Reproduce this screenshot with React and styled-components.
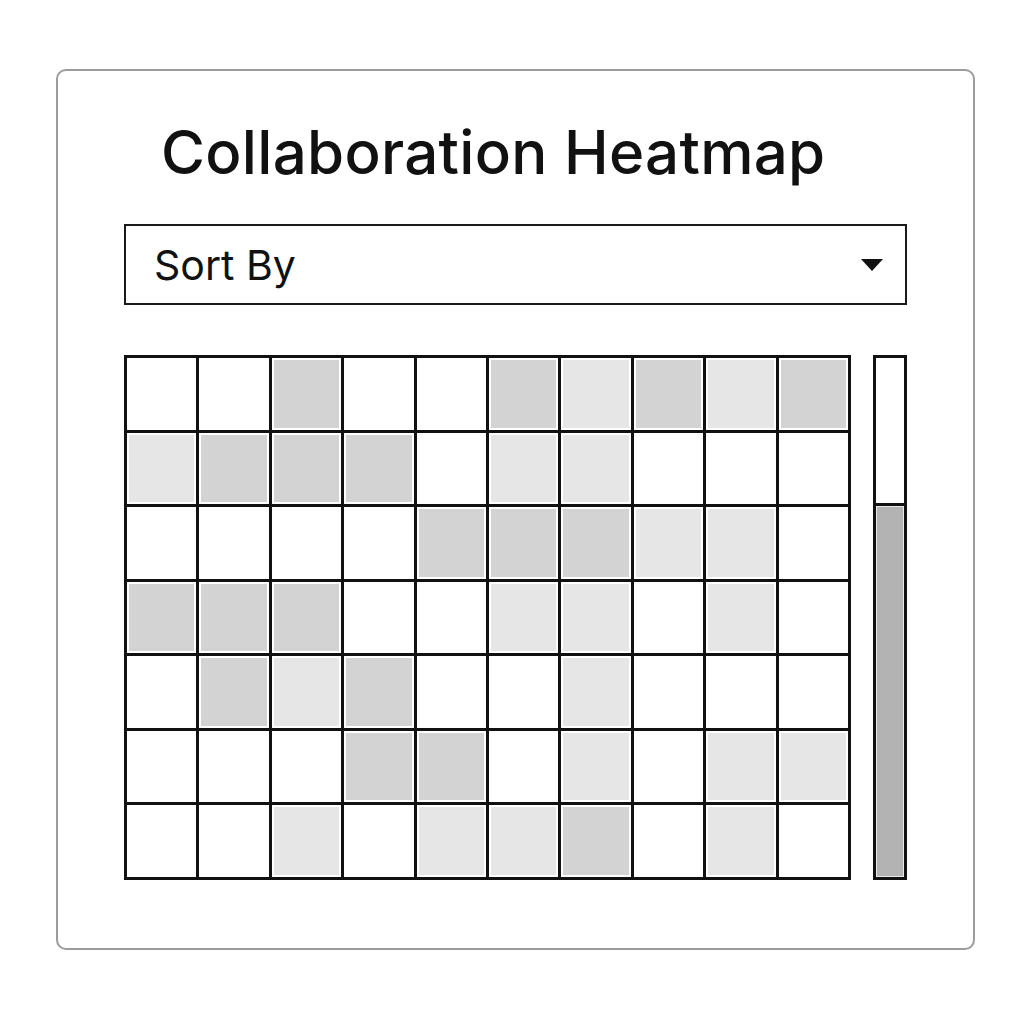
import React from 'react';
import styled, { createGlobalStyle } from 'styled-components';

const levels = [
  [0, 0, 2, 0, 0, 2, 1, 2, 1, 2],
  [1, 2, 2, 2, 0, 1, 1, 0, 0, 0],
  [0, 0, 0, 0, 2, 2, 2, 1, 1, 0],
  [2, 2, 2, 0, 0, 1, 1, 0, 1, 0],
  [0, 2, 1, 2, 0, 0, 1, 0, 0, 0],
  [0, 0, 0, 2, 2, 0, 1, 0, 1, 1],
  [0, 0, 1, 0, 1, 1, 2, 0, 1, 0],
];

const shades = ['#ffffff', '#e6e6e6', '#d3d3d3'];

const GlobalStyle = createGlobalStyle`
  body {
    margin: 0;
    background: #ffffff;
    font-family: Inter, "Liberation Sans", sans-serif;
    color: #111111;
  }
`;

const Page = styled.div`
  padding: 69px 0 0 56px;
`;

const Card = styled.section`
  box-sizing: border-box;
  width: 919px;
  height: 881px;
  padding: 46px 66px 0;
  border: 2px solid #9c9c9c;
  border-radius: 10px;
  display: flex;
  flex-direction: column;
`;

const Title = styled.h1`
  margin: 0 0 37px 37px;
  font-size: 60px;
  line-height: 70px;
  font-weight: 500;
  letter-spacing: 0.3px;
  color: #111111;
`;

const Select = styled.div`
  box-sizing: border-box;
  height: 81px;
  padding: 0 22px 0 28px;
  border: 2px solid #1a1a1a;
  display: flex;
  align-items: center;
  justify-content: space-between;
  font-size: 41px;
  font-weight: 400;
  margin-bottom: 50px;
`;

const Body = styled.div`
  display: flex;
  gap: 22px;
  height: 525px;
`;

const Grid = styled.div`
  flex: 1;
  display: grid;
  grid-template-columns: repeat(10, 1fr);
  grid-template-rows: repeat(7, 1fr);
  gap: 3px;
  padding: 3px;
  background: #111111;
`;

const Cell = styled.div`
  background: ${(p) => shades[p.$level]};
  box-shadow: inset 0 0 0 2px #ffffff;
`;

const Track = styled.div`
  box-sizing: border-box;
  width: 34px;
  border: 3px solid #111111;
  background: #ffffff;
  display: flex;
  flex-direction: column;
`;

const Thumb = styled.div`
  flex: 1;
  margin-top: ${(p) => p.$offset}px;
  border-top: 3px solid #111111;
  background: #b3b3b3;
  box-shadow: inset 0 0 0 1px #e8e8e8;
`;

export default function App() {
  return (
    <Page>
      <GlobalStyle />
      <Card>
        <Title>Collaboration Heatmap</Title>
        <Select>
          <span>Sort By</span>
          <svg width="22" height="12" viewBox="0 0 22 12">
            <polygon points="0,0 22,0 11,12" fill="#111" />
          </svg>
        </Select>
        <Body>
          <Grid>
            {levels.map((row, r) =>
              row.map((level, c) => <Cell key={`${r}-${c}`} $level={level} />)
            )}
          </Grid>
          <Track>
            <Thumb $offset={145} />
          </Track>
        </Body>
      </Card>
    </Page>
  );
}
